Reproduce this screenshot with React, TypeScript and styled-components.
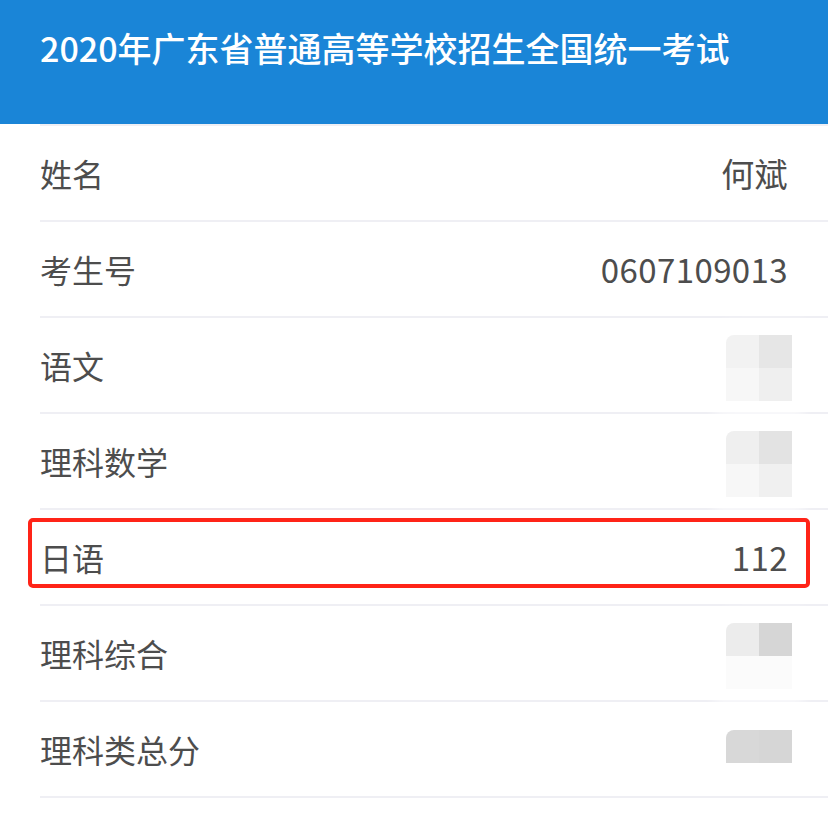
import React from "react";
import styled, { createGlobalStyle } from "styled-components";

const GlobalStyle = createGlobalStyle`
  html, body {
    margin: 0;
    padding: 0;
    background: #ffffff;
  }
  body {
    font-family: "Noto Sans CJK SC", "Noto Sans", "Liberation Sans", sans-serif;
  }
`;

// 页面
const Page = styled.div`
  width: 828px;
  min-height: 828px;
  overflow: hidden;
  background: #fff;
`;

const Header = styled.header`
  height: 124px;
  background: #1a85d7;
  box-sizing: border-box;
  padding: 22px 40px 0;
  overflow: hidden;
`;

const Title = styled.h1`
  margin: 0;
  font-size: 34px;
  font-weight: 500;
  line-height: 52px;
  color: #ffffff;
  white-space: nowrap;
`;

const List = styled.div`
  margin-left: 40px;
  border-top: 2px solid #efeff4;
`;

const Row = styled.div`
  position: relative;
  height: 94px;
  display: flex;
  align-items: center;
  justify-content: space-between;
  padding-right: 40px;
  border-bottom: 2px solid #efeff4;
`;

const Label = styled.span`
  font-size: 32px;
  color: #4d4d4d;
  line-height: 1;
`;

const Value = styled.span`
  font-size: 33px;
  color: #4d4d4d;
  line-height: 1;
  letter-spacing: 0.4px;
`;

const Highlight = styled.div`
  position: absolute;
  left: -12px;
  right: 18px;
  top: 8px;
  bottom: 16px;
  border: 4px solid #ff2418;
  border-radius: 5px;
  pointer-events: none;
`;

const Mosaic = styled.div<{ $rows: number }>`
  display: grid;
  grid-template-columns: 33px 33px;
  grid-template-rows: repeat(${(p) => p.$rows}, 33px);
  margin-right: -4px;
  margin-top: ${(p) => (p.$rows === 1 ? "-6px" : "6px")};
  border-top-left-radius: 8px;
  overflow: hidden;
  box-shadow: 0 0 12px 12px rgba(255, 255, 255, 0.95);
`;

const Cell = styled.div<{ $c: string }>`
  background: ${(p) => p.$c};
`;

interface ScoreRow {
  label: string;
  value?: string;
  mosaic?: string[];
  highlight?: boolean;
}

const rows: ScoreRow[] = [
  { label: "姓名", value: "何斌" },
  { label: "考生号", value: "0607109013" },
  { label: "语文", mosaic: ["#f2f2f2", "#e6e6e6", "#f7f7f7", "#efefef"] },
  { label: "理科数学", mosaic: ["#efefef", "#e3e3e3", "#f7f7f7", "#f0f0f0"] },
  { label: "日语", value: "112", highlight: true },
  { label: "理科综合", mosaic: ["#ececec", "#d6d6d6", "#fbfbfb", "#fbfbfb"] },
  { label: "理科类总分", mosaic: ["#d8d8d8", "#d6d6d6"] },
];

const App: React.FC = () => {
  return (
    <Page>
      <GlobalStyle />
      <Header>
        <Title>2020年广东省普通高等学校招生全国统一考试</Title>
      </Header>
      <List>
        {rows.map((row) => (
          <Row key={row.label}>
            <Label>{row.label}</Label>
            {row.mosaic ? (
              <Mosaic $rows={row.mosaic.length / 2}>
                {row.mosaic.map((c, i) => (
                  <Cell key={i} $c={c} />
                ))}
              </Mosaic>
            ) : (
              <Value>{row.value}</Value>
            )}
            {row.highlight && <Highlight />}
          </Row>
        ))}
      </List>
    </Page>
  );
};

export default App;
